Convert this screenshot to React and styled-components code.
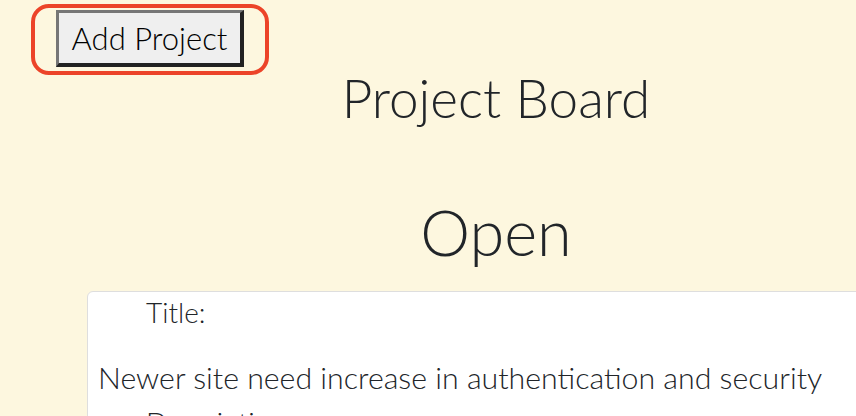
import React from "react";
import styled, { createGlobalStyle } from "styled-components";

const GlobalStyle = createGlobalStyle`
  html, body {
    margin: 0;
    padding: 0;
    background: #fdf7df;
    overflow: hidden;
  }
  body {
    font-family: Lato, "Open Sans", sans-serif;
    font-weight: 300;
    color: #212529;
  }
`;

const Page = styled.div`
  width: 905px;
  height: 416px;
`;

const Toolbar = styled.div`
  display: flex;
  padding: 8px 0 0 35px;
`;

const FocusRing = styled.div`
  display: flex;
  justify-content: center;
  align-items: flex-start;
  width: 230px;
  height: 63px;
  padding-top: 2px;
  box-sizing: border-box;
  outline: 4px solid #ec4429;
  border-radius: 14px;
`;

const AddButton = styled.button`
  width: 188px;
  height: 57px;
  box-sizing: border-box;
  background: #efefef;
  border-style: solid;
  border-width: 3px 4px 4px 3px;
  border-color: #767676 #222 #222 #767676;
  font-family: Lato, "Open Sans", sans-serif;
  font-weight: 300;
  font-size: 31px;
  color: #000;
  padding: 0;
  cursor: pointer;
`;

const Main = styled.main`
  margin-left: 87px;
  width: 818px;
  text-align: center;
`;

const BoardTitle = styled.h1`
  margin: 0;
  font-size: 53px;
  font-weight: 300;
  line-height: 53px;
`;

const ColumnTitle = styled.h2`
  margin: 72px 0 23px;
  font-size: 63px;
  font-weight: 300;
  line-height: 72px;
`;

const Card = styled.div`
  background: #fff;
  border: 1px solid #dedede;
  border-radius: 6px;
  text-align: left;
  padding: 2px 10px 0;
  min-height: 200px;
`;

const Label = styled.div`
  padding-left: 48px;
  font-size: 28px;
  line-height: 36px;
`;

const Value = styled.p`
  margin: 27px 0 7px;
  font-size: 30.3px;
  line-height: 40px;
  white-space: nowrap;
`;

export default function App() {
  return (
    <>
      <GlobalStyle />
      <Page>
        <Toolbar>
          <FocusRing>
            <AddButton>Add Project</AddButton>
          </FocusRing>
        </Toolbar>
        <Main>
          <BoardTitle>Project Board</BoardTitle>
          <ColumnTitle>Open</ColumnTitle>
          <Card>
            <Label>Title:</Label>
            <Value>Newer site need increase in authentication and security</Value>
            <Label>Description:</Label>
          </Card>
        </Main>
      </Page>
    </>
  );
}
